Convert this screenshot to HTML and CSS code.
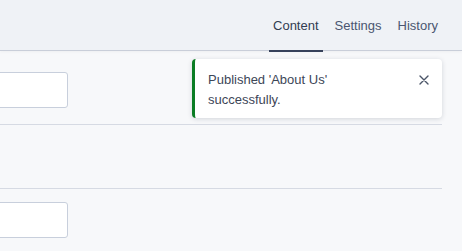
FILE: index.html
```html
<!DOCTYPE html>
<html>
<head>
<meta charset="utf-8">
<link rel="stylesheet" href="styles.css">
</head>
<body>
<header class="topbar">
  <nav class="tabs">
    <a class="tab active">Content</a>
    <a class="tab">Settings</a>
    <a class="tab">History</a>
  </nav>
</header>
<main class="editor">
  <div class="field"><div class="input"></div></div>
  <hr class="divider">
  <div class="section-gap"></div>
  <hr class="divider">
  <div class="field field-second"><div class="input"></div></div>

  <div class="toast" role="status">
    <div class="toast-text">Published 'About Us' successfully.</div>
    <button class="toast-close" aria-label="Close">
      <svg width="10" height="10" viewBox="0 0 10 10"><path d="M1 1 L9 9 M9 1 L1 9" stroke="#4b5568" stroke-width="1.4" stroke-linecap="round" fill="none"/></svg>
    </button>
  </div>
</main>
</body>
</html>
```

FILE: styles.css
```css
html, body {
  margin: 0;
  padding: 0;
}
body {
  background: #f7f8fa;
  font-family: "Liberation Sans", Arial, sans-serif;
  font-size: 13px;
  color: #3d4657;
  overflow: hidden;
  height: 251px;
}
.topbar {
  height: 51px;
  box-sizing: border-box;
  background: #eff2f6;
  border-bottom: 1px solid #c9ced9;
  display: flex;
  justify-content: flex-end;
  padding-right: 20px;
  box-shadow: 0 1px 3px rgba(0, 0, 0, 0.04);
  position: relative;
  z-index: 1;
}
.tabs {
  display: flex;
  gap: 8px;
  align-items: flex-start;
}
.tab {
  position: relative;
  display: block;
  height: 52px;
  box-sizing: border-box;
  padding: 18px 4px 0;
  line-height: 16px;
  color: #4a5670;
  border-bottom: 2px solid transparent;
  cursor: pointer;
}
.tab.active {
  color: #323c51;
  border-bottom-color: #37425b;
}
.editor {
  position: relative;
  padding-right: 20px;
}
.field {
  padding-top: 21px;
}
.field-second {
  padding-top: 13px;
}
.input {
  width: 268px;
  height: 36px;
  box-sizing: border-box;
  margin-left: -200px;
  background: #ffffff;
  border: 1px solid #c8cfdc;
  border-radius: 3px;
}
.divider {
  margin: 16px 0 0;
  border: 0;
  border-top: 1px solid #d6dae3;
  height: 0;
}
.section-gap {
  height: 47px;
}
.toast {
  position: absolute;
  top: 8px;
  right: 20px;
  width: 250px;
  box-sizing: border-box;
  background: #ffffff;
  border-left: 3px solid #0b7d24;
  border-radius: 4px;
  box-shadow: 0 1px 5px rgba(20, 30, 50, 0.16);
  padding: 11px 12px 8px 13px;
  display: flex;
  align-items: flex-start;
}
.toast-text {
  flex: 1;
  line-height: 20px;
  color: #3d4657;
}
.toast-close {
  width: 12px;
  height: 20px;
  margin-left: 16px;
  padding: 0;
  border: 0;
  background: none;
  display: flex;
  align-items: center;
  justify-content: center;
  cursor: pointer;
}
```
